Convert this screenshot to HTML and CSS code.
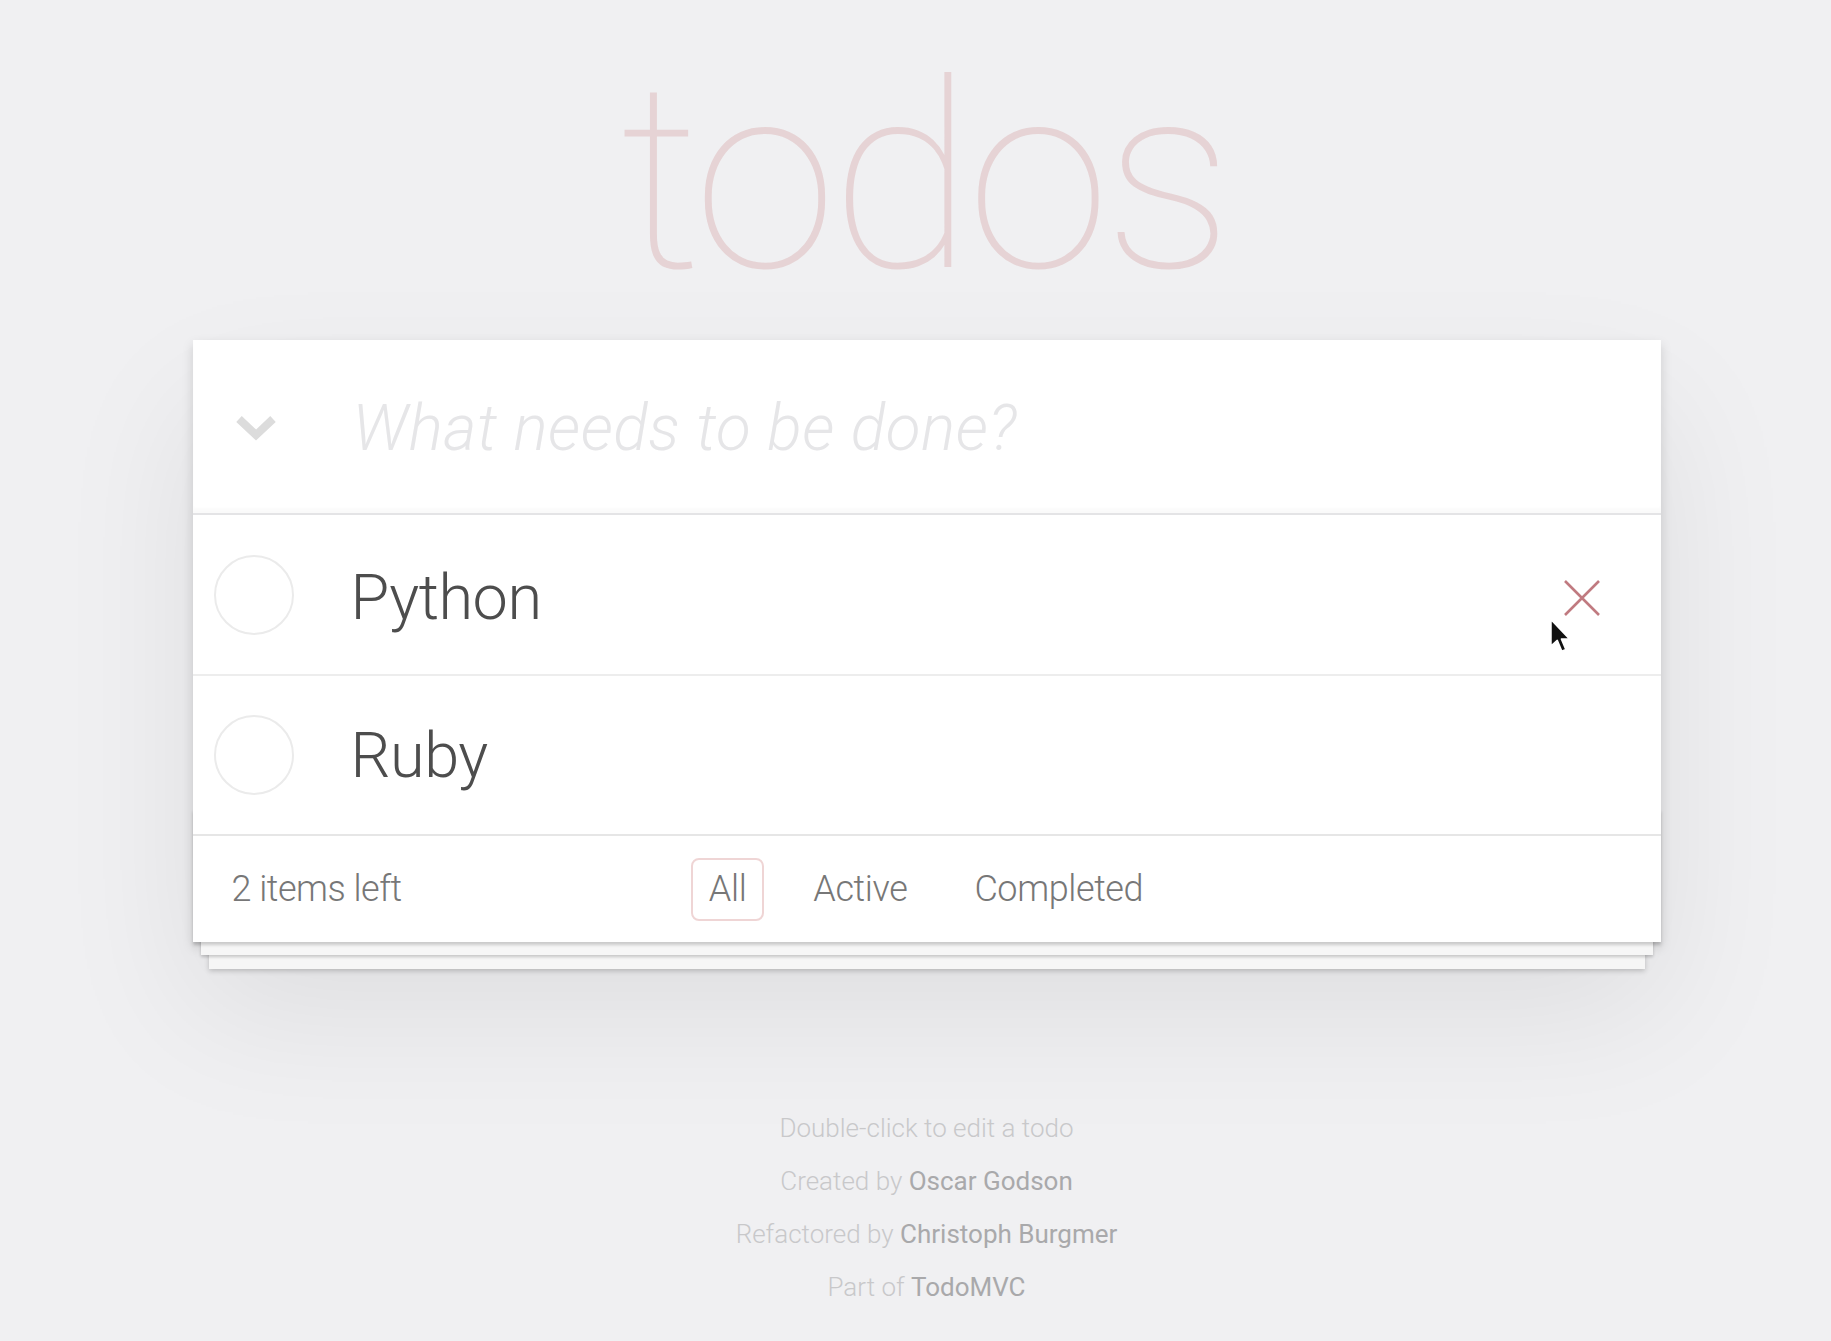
FILE: index.html
```html
<!DOCTYPE html>
<html lang="en">
<head>
<meta charset="utf-8">
<title>todos</title>
<link rel="stylesheet" href="styles.css">
</head>
<body>
<div class="page">
  <h1 class="title">todos</h1>
  <section class="todoapp">
    <header class="new-row">
      <div class="toggle-all">
        <svg width="42" height="26" viewBox="0 0 42 26"><polyline points="4,4 21,20 38,4" fill="none" stroke="#dcdcdc" stroke-width="8"/></svg>
      </div>
      <input class="new-todo" placeholder="What needs to be done?">
    </header>
    <ul class="todo-list">
      <li class="todo">
        <span class="toggle"></span>
        <label class="todo-label">Python</label>
        <button class="destroy" aria-label="delete">
          <svg width="38" height="38" viewBox="0 0 38 38"><path d="M2 2 L36 36 M36 2 L2 36" stroke="#c07a80" stroke-width="2.6" fill="none"/></svg>
        </button>
        <svg class="cursor" width="23" height="36" viewBox="0 0 18 28"><path d="M1.5 1 L1.5 22 L6.5 17.5 L10 26 L13.2 24.6 L9.8 16.4 L16.2 16.4 Z" fill="#111" stroke="#fff" stroke-width="1.3" stroke-linejoin="round"/></svg>
      </li>
      <li class="todo last">
        <span class="toggle"></span>
        <label class="todo-label">Ruby</label>
      </li>
    </ul>
    <footer class="footer">
      <span class="todo-count">2 items left</span>
      <ul class="filters">
        <li><a class="selected">All</a></li>
        <li><a>Active</a></li>
        <li><a>Completed</a></li>
      </ul>
      <span class="spacer"></span>
    </footer>
  </section>
  <footer class="info">
    <p>Double-click to edit a todo</p>
    <p>Created by <a>Oscar Godson</a></p>
    <p>Refactored by <a>Christoph Burgmer</a></p>
    <p>Part of <a>TodoMVC</a></p>
  </footer>
</div>
</body>
</html>
```

FILE: styles.css
```css
html, body {
  margin: 0;
  padding: 0;
}
body {
  background: #f0f0f2;
  font-family: "Helvetica Neue", Roboto, "Liberation Sans", sans-serif;
  font-weight: 300;
  color: #4d4d4d;
  padding-left: 22px;
  min-height: 1341px;
  box-sizing: border-box;
}
.page {
  width: 1468px;
  margin: 0 auto;
  padding-top: 48px;
}
.title {
  margin: 0 0 32px;
  font-size: 260px;
  line-height: 1;
  letter-spacing: -6px;
  text-indent: -6px;
  font-weight: 100;
  text-align: center;
  color: rgba(175, 47, 47, 0.15);
  height: 260px;
}
.todoapp {
  background: #fff;
  box-shadow: 0 5px 11px 0 rgba(0, 0, 0, 0.14), 0 67px 133px 0 rgba(0, 0, 0, 0.08);
}
.new-row {
  height: 173px;
  display: flex;
  align-items: center;
  border-bottom: 2px solid #e4e4e6;
  box-shadow: inset 0 -5px 3px rgba(0, 0, 0, 0.02);
}
.toggle-all {
  width: 160px;
  padding-left: 42px;
  box-sizing: border-box;
  display: flex;
  align-items: center;
  flex: none;
  padding-top: 2px;
}
.new-todo {
  flex: 1;
  border: none;
  outline: none;
  background: transparent;
  font-family: inherit;
  font-size: 64px;
  font-style: italic;
  font-weight: 300;
  letter-spacing: 0.5px;
  color: #4d4d4d;
  padding: 4px 0 0;
  margin: 0;
}
.new-todo::placeholder {
  color: #e6e6e8;
  font-style: italic;
  font-weight: 300;
}
.todo-list {
  list-style: none;
  margin: 0;
  padding: 0;
}
.todo {
  position: relative;
  height: 159px;
  display: flex;
  align-items: center;
  border-bottom: 2px solid #ededed;
}
.todo.last {
  height: 158px;
  border-bottom: none;
}
.toggle {
  width: 80px;
  height: 80px;
  box-sizing: border-box;
  border: 2px solid #ebebeb;
  border-radius: 50%;
  margin-left: 21px;
  flex: none;
}
.todo-label {
  margin-left: 57px;
  font-size: 63px;
  line-height: 1.2;
  letter-spacing: -0.5px;
  color: #4d4d4d;
  flex: 1;
  padding-top: 6px;
}
.todo.last .todo-label {
  padding-top: 2px;
}
.destroy {
  border: none;
  background: none;
  padding: 0;
  margin: 6px 60px 0 0;
  width: 38px;
  height: 38px;
  display: flex;
}
.cursor {
  position: absolute;
  left: 1356px;
  top: 103px;
}
.footer {
  position: relative;
  height: 106px;
  border-top: 2px solid #e6e6e6;
  display: grid;
  grid-template-columns: 1fr auto 1fr;
  align-items: center;
  color: #777;
  font-size: 36px;
  padding: 0 0 0 39px;
}
.footer::before {
  content: "";
  position: absolute;
  left: 0;
  right: 0;
  bottom: 0;
  height: 133px;
  pointer-events: none;
  box-shadow: 0 3px 3px rgba(0, 0, 0, 0.18),
    0 21px 0 -8px #f6f6f6,
    0 23px 3px -8px rgba(0, 0, 0, 0.2),
    0 43px 0 -16px #f6f6f6,
    0 45px 5px -16px rgba(0, 0, 0, 0.2);
}
.todo-count {
  justify-self: start;
  letter-spacing: -0.5px;
}
.filters {
  list-style: none;
  margin: 0 40px 0 0;
  padding: 0;
  display: flex;
  gap: 15px;
}
.filters a {
  display: inline-block;
  line-height: 43px;
  margin: 0 8px;
  padding: 8px 16px;
  border: 2.5px solid transparent;
  border-radius: 8px;
  color: inherit;
  letter-spacing: -0.4px;
}
.filters a.selected {
  border-color: rgba(175, 47, 47, 0.2);
}
.info {
  margin-top: 173px;
  text-align: center;
  color: #c8c8ca;
  font-size: 26px;
  display: flex;
  flex-direction: column;
  gap: 26px;
}
.info p {
  margin: 0;
  line-height: 27px;
}
.info a {
  color: #a9a9ab;
  font-weight: 400;
}
```
